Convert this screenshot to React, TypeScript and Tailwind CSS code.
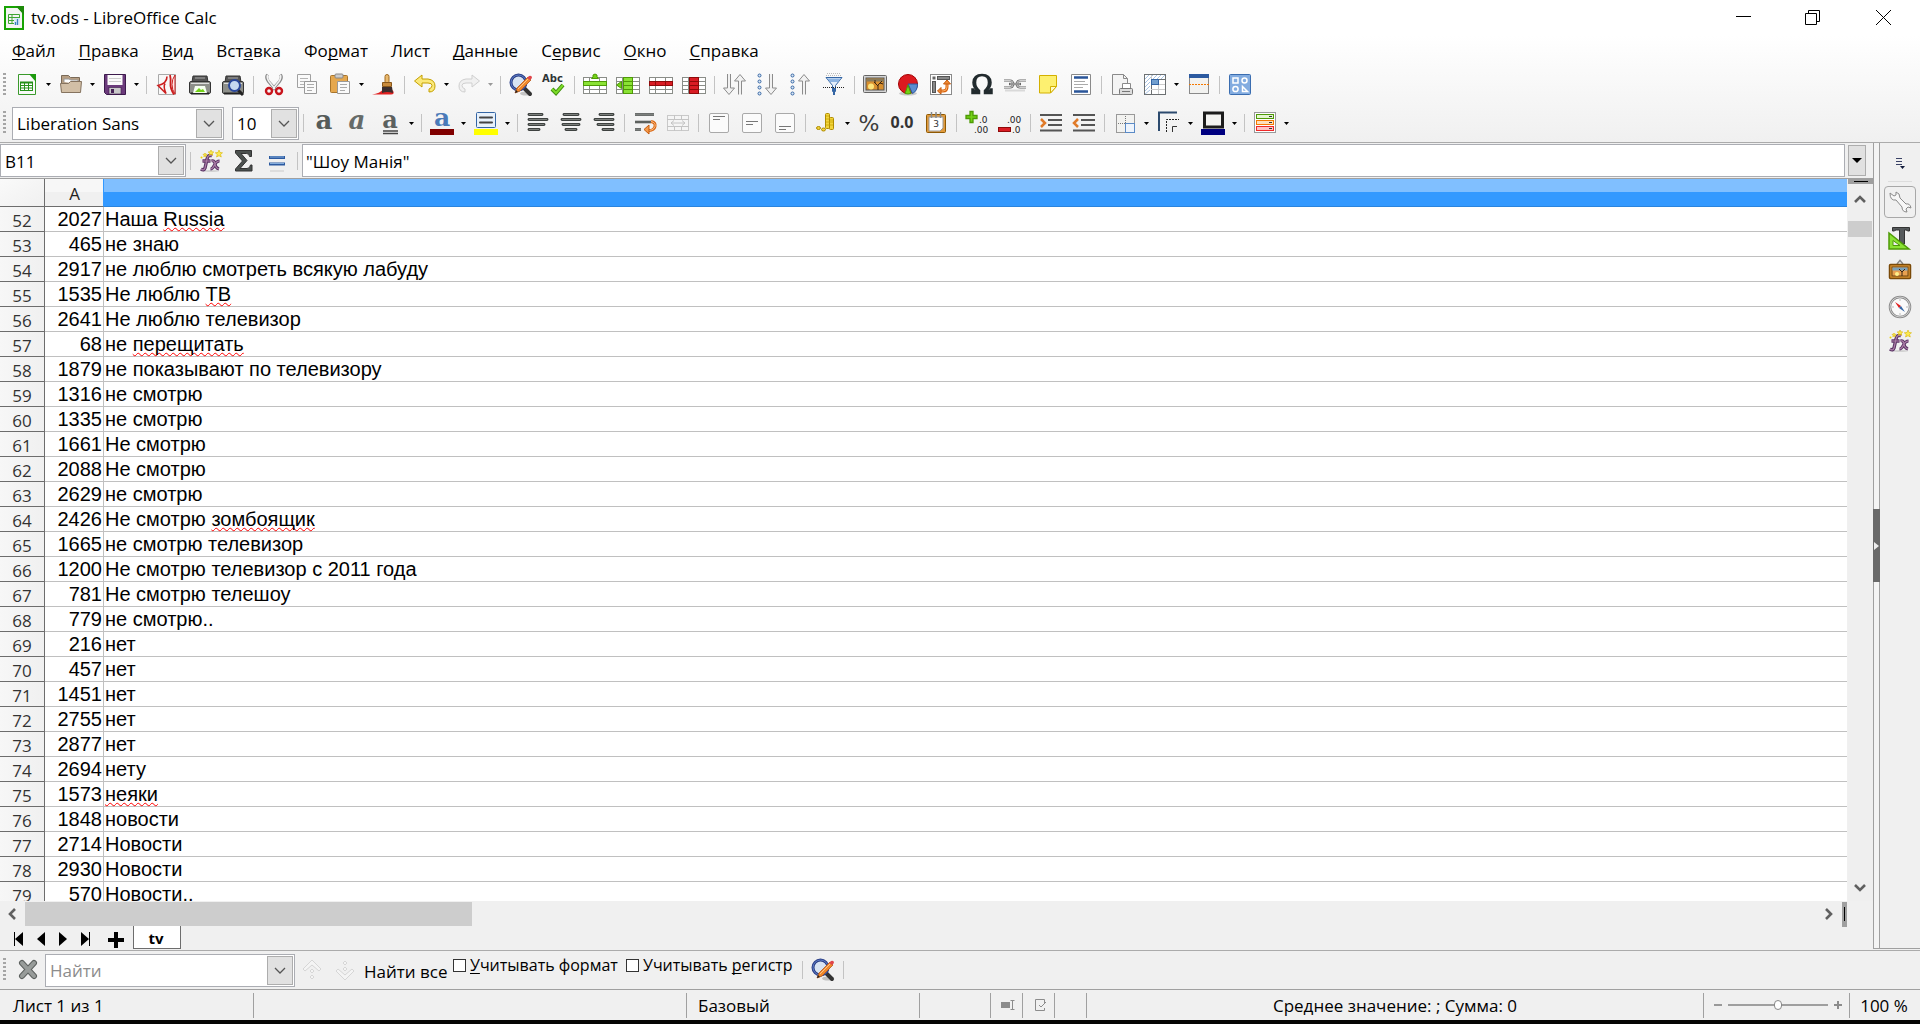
import React, { ReactNode } from 'react';

const rows: [number, string, string?][] = [
  [2027, 'Наша ', 'Russia'],
  [465, 'не знаю'],
  [2917, 'не люблю смотреть всякую лабуду'],
  [1535, 'Не люблю ', 'ТВ'],
  [2641, 'Не люблю телевизор'],
  [68, 'не ', 'перещитать'],
  [1879, 'не показывают по телевизору'],
  [1316, 'не смотрю'],
  [1335, 'не смотрю'],
  [1661, 'Не смотрю'],
  [2088, 'Не смотрю'],
  [2629, 'не смотрю'],
  [2426, 'Не смотрю ', 'зомбоящик'],
  [1665, 'не смотрю телевизор'],
  [1200, 'Не смотрю телевизор с 2011 года'],
  [781, 'Не смотрю телешоу'],
  [779, 'не смотрю..'],
  [216, 'нет'],
  [457, 'нет'],
  [1451, 'нет'],
  [2755, 'нет'],
  [2877, 'нет'],
  [2694, 'нету'],
  [1573, '', 'неяки'],
  [1848, 'новости'],
  [2714, 'Новости'],
  [2930, 'Новости'],
  [570, 'Новости..'],
];

// [before, mnemonic, after]
const menus = [
  ['', 'Ф', 'айл'],
  ['', 'П', 'равка'],
  ['', 'В', 'ид'],
  ['Вст', 'а', 'вка'],
  ['Фо', 'р', 'мат'],
  ['Лист', '', ''],
  ['', 'Д', 'анные'],
  ['С', 'е', 'рвис'],
  ['', 'О', 'кно'],
  ['', 'С', 'правка'],
];

const Icon = ({ children }: { children: ReactNode }) => (
  <svg viewBox="0 0 24 24" className="size-6 shrink-0 overflow-visible" fill="none">
    {children}
  </svg>
);

const Tool = ({ label, children }: { label: string; children: ReactNode }) => (
  <button aria-label={label} className="flex h-8 w-[33px] shrink-0 items-center justify-center">
    <Icon>{children}</Icon>
  </button>
);

const More = ({ label, dim }: { label: string; dim?: boolean }) => (
  <button aria-label={label} className="flex h-8 w-[11px] shrink-0 items-center justify-center">
    <svg viewBox="0 0 5 3" className="h-[3px] w-[5px]">
      <path d="M0 0h5L2.5 3z" fill={dim ? '#999' : '#000'} />
    </svg>
  </button>
);

const Sep = () => (
  <div className="flex w-2 shrink-0 justify-center">
    <div className="h-[18px] w-px bg-[#c3c3c3]" />
  </div>
);

const Grip = () => (
  <svg viewBox="0 0 4 24" className="h-6 w-1 shrink-0" fill="#a5a5a5">
    {[0, 4, 8, 12, 16, 20].map((y) => (
      <rect key={y} x="0" y={y} width="3" height="2" />
    ))}
  </svg>
);

const Chevron = ({ d }: { d: string }) => (
  <svg viewBox="0 0 12 12" className="size-3" fill="none" stroke="#606060" strokeWidth="2.6">
    <path d={d} />
  </svg>
);

const Combo = ({ label, value, placeholder, className }: { label: string; value?: string; placeholder?: string; className: string }) => (
  <div className={`flex h-[33px] shrink-0 border border-[#abadb3] bg-white p-px ${className}`}>
    <input
      aria-label={label}
      defaultValue={value}
      placeholder={placeholder}
      className="w-0 min-w-0 flex-1 px-[3px] pt-0.5 outline-none placeholder:text-[#8c8c8c]"
    />
    <button aria-label={`${label}: список`} className="flex w-[26px] items-center justify-center border border-[#adadad] bg-[#e1e1e1]">
      <svg viewBox="0 0 12 7" className="h-[7px] w-3" fill="none" stroke="#555" strokeWidth="1.3">
        <path d="M1 1l5 5 5-5" />
      </svg>
    </button>
  </div>
);

/* Drawings shared by several buttons */

const GridLines = () => (
  <>
    <rect x="0.5" y="4.5" width="23" height="16" fill="#fff" stroke="#8a8d88" />
    <path d="M0 8.5h24M0 12.5h24M0 16.5h24M6.5 4v17M16.5 4v17" stroke="#8a8d88" />
  </>
);

const FindIcon = () => (
  <>
    <ellipse cx="17" cy="20.5" rx="6" ry="2" fill="#000" opacity=".2" />
    <path d="M15 15l6 6" stroke="#333" strokeWidth="4" strokeLinecap="round" />
    <circle cx="9.5" cy="9.5" r="7.5" fill="#d8e4f2" stroke="#2b3f86" strokeWidth="3" />
    <circle cx="9.5" cy="9.5" r="7.5" stroke="#5f7fc9" />
    <path d="M6 20l2-5L19 4l3 3-11 11z" fill="#f0892b" stroke="#b4561a" strokeWidth=".8" />
    <path d="M9 16L20 5" stroke="#fcc48a" />
    <path d="M18 5l2-2q3-1 3 2l-2 2z" fill="#e0444a" />
    <path d="M6 20l1-3 2 2z" fill="#222" />
  </>
);

const FxIcon = () => (
  <>
    <ellipse cx="12" cy="22" rx="8" ry="1" fill="#000" opacity=".12" />
    <path d="M13 7q-4-2-5 3L6 19q-1 3-4 1M3.5 12h8" stroke="#5c3566" strokeWidth="3.4" />
    <path d="M12.5 12q3-1 3.5 3t4 5M20.5 12q-3 0-5 4t-4 4" stroke="#5c3566" strokeWidth="3" />
    <path d="M13 7q-4-2-5 3L6 19q-1 3-4 1M3.5 12h8M12.5 12q3-1 3.5 3t4 5M20.5 12q-3 0-5 4t-4 4" stroke="#ad7fa8" strokeWidth="1.2" />
    <path
      d="M20 1l1 2.5 2.5.3-2 1.7.8 2.5L20 6.700 17.5 8l.8-2.5-2-1.7 2.7-.3zM12 1l.8 1.8 2 .2-1.5 1.3.4 2-1.7-1-1.7 1 .4-2L9.2 3l2-.2zM6 4l.5 1.2 1.5.2-1 1 .2 1.3L6 7l-1.200.7.2-1.3-1-1 1.5-.2z"
      fill="#fce94f"
      stroke="#d9b600"
      strokeWidth=".6"
    />
    <circle cx="2.5" cy="8.5" r="1" fill="#edd400" />
  </>
);

const ArrowDown = ({ x }: { x: number }) => (
  <path d={`M${x - 1.5} 1v14h-4l5.500 6.500 5.500-6.500h-4V1`} fill="#f2f2f2" stroke="#8c8c8c" />
);

const ArrowUp = ({ x }: { x: number }) => (
  <path d={`M${x - 1.5} 21.500V8h-4l5.500-6.500 5.500 6.500h-4v13.500`} fill="#f2f2f2" stroke="#8c8c8c" />
);

const Dots = () => (
  <g stroke="#3465a4" fill="#dce8f5">
    <circle cx="3.500" cy="2.500" r="1.500" />
    <circle cx="3.500" cy="8.500" r="1.500" />
    <circle cx="3.500" cy="14.500" r="1.500" />
    <circle cx="3.500" cy="20.500" r="1.500" />
  </g>
);

const StandardBar = () => (
  <div className="flex h-[35px] items-center pl-[3px]">
    <Grip />
    <div className="w-[3px] shrink-0" />
    <Tool label="Создать">
      <path d="M3.5 1.5h12l5 5v15h-17z" fill="#fafafa" stroke="#3a9a2c" />
      <path d="M14 1h7v8z" fill="#1d9a0f" />
      <rect x="5.5" y="9.5" width="12" height="8" fill="#fff" stroke="#27911a" />
      <path d="M5 9.5h13" stroke="#27911a" strokeWidth="2" />
      <path d="M5 12.5h13M5 15h13M9.5 9v9M13.5 9v9" stroke="#27911a" />
    </Tool>
    <More label="Создать: ещё" />
    <Tool label="Открыть">
      <path d="M2.5 18V2.500h7l2 2h9V18z" fill="#b79f84" stroke="#7a6a58" />
      <path d="M5 9V6h5l2 1h7v4" fill="#fff" stroke="#999" />
      <path d="M1.500 10.5h8l2-2h11L21.5 19.5h-19z" fill="#d2bfa6" stroke="#85735f" />
    </Tool>
    <More label="Открыть: ещё" />
    <Tool label="Сохранить">
      <path d="M1.5 1.5h21v20h-19l-2-2z" fill="#6b3a7b" stroke="#3c1a4c" />
      <rect x="4.5" y="2" width="15" height="10" fill="#fafafa" />
      <path d="M6 5.5h12M6 8.5h12" stroke="#ccc" />
      <rect x="6" y="14.5" width="12" height="6.5" fill="#c9c9c9" stroke="#3c1a4c" strokeWidth=".6" />
      <rect x="8" y="16" width="3" height="4" fill="#472357" />
    </Tool>
    <More label="Сохранить: ещё" />
    <Sep />
    <Tool label="Экспорт в PDF">
      <path d="M3.5 1.5h17v20h-17z" fill="#f8f8f8" stroke="#a9a9a9" />
      <path d="M15 2q1 4 .5 8.500T19 21.500" stroke="#cc1f1f" strokeWidth="1.800" />
      <path d="M20 2v19q-3-4-3-9.500T20 2z" fill="#fdeaea" stroke="#cc1f1f" />
      <path d="M12 3.500q0 7-9 9l8 8q-3-7-1-10" stroke="#cc1f1f" strokeWidth="1.600" />
    </Tool>
    <Tool label="Печать">
      <path d="M5 3h14l1 6H4z" fill="#555" stroke="#333" />
      <path d="M7 5h10" stroke="#aaa" />
      <rect x="1.5" y="8.5" width="21" height="12" rx="1.5" fill="#8d8f8a" stroke="#333" />
      <path d="M3 10.5h18" stroke="#ddd" />
      <path d="M3 20.5h18" stroke="#222" strokeWidth="2" />
      <path d="M7 13h10l2 7H5z" fill="#f5fff0" />
      <path d="M8 18l3-3 2 2 2-1 2 3H7z" fill="#73d216" />
    </Tool>
    <Tool label="Просмотр печати">
      <path d="M5 3h14l1 6H4z" fill="#555" stroke="#333" />
      <path d="M7 5h10" stroke="#aaa" />
      <rect x="1.5" y="8.5" width="21" height="12" rx="1.5" fill="#8d8f8a" stroke="#333" />
      <path d="M3 10.5h18" stroke="#ddd" />
      <path d="M3 20.5h18" stroke="#222" strokeWidth="2" />
      <path d="M17 17l5 5" stroke="#222" strokeWidth="3" />
      <circle cx="13.5" cy="12.5" r="5.5" fill="#c6d9f0" stroke="#2a489b" strokeWidth="2" />
    </Tool>
    <Sep />
    <Tool label="Вырезать">
      <path d="M5.5 1.5q-2 3 1 7l7 8M18.5 1.5q2 3-1 7l-7 8" stroke="#888" strokeWidth="3" />
      <path d="M5.5 2q-1 3 1.5 6.5l6 7.5M18.5 2q1 3-1.5 6.5L11 16" stroke="#f3f3f3" strokeWidth="1.5" />
      <circle cx="7" cy="18" r="3" stroke="#c8141c" strokeWidth="2.400" />
      <circle cx="17" cy="18" r="3" stroke="#c8141c" strokeWidth="2.400" />
    </Tool>
    <Tool label="Копировать">
      <path d="M2.5 1.5h13v13h-13z" fill="#fafafa" stroke="#a0a0a0" />
      <path d="M5 5.5h8M5 8.5h8M5 11.5h5" stroke="#b4b4b4" />
      <path d="M9.5 8.5h12v12h-12z" fill="#fafafa" stroke="#999" />
      <path d="M12 11.500h7M12 14.500h7M12 17.500h5" stroke="#aaa" />
    </Tool>
    <Tool label="Вставить">
      <rect x="2.5" y="2.5" width="17" height="17" rx="1" fill="#e5a84f" stroke="#a8752c" />
      <rect x="7" y="1" width="8" height="4" rx="1" fill="#ccc" stroke="#888" />
      <path d="M9.5 8.5h12v12h-12z" fill="#fafafa" stroke="#999" />
      <path d="M12 11.500h7M12 14.500h7M12 17.500h5" stroke="#aaa" />
    </Tool>
    <More label="Вставить: ещё" />
    <Tool label="Копировать форматирование">
      <path d="M0 21.500q8-1 11-5l10 1q2 4-2 4z" fill="#e02020" />
      <rect x="13" y="1.5" width="4" height="9" rx="2" fill="#e9b96e" stroke="#a06a20" />
      <path d="M10.5 9.500h9v4h-9z" fill="#c98b3c" stroke="#87561a" />
      <path d="M10 14h10l1 6q-6-2-11 0z" fill="#3a2d2d" />
    </Tool>
    <Sep />
    <Tool label="Отменить">
      <path d="M9 2v4h6q7 1 7 7t-6 6v-3q3-1 3-3.5T15 10H9v4L1.5 8z" fill="#fbe97a" stroke="#c4a000" />
    </Tool>
    <More label="Отменить: ещё" />
    <Tool label="Вернуть">
      <path d="M15 2v4H9q-7 1-7 7t6 6v-3q-3-1-3-3.5T9 10h6v4l7.5-6z" fill="#f0f0f0" stroke="#cfcfcf" />
    </Tool>
    <More label="Вернуть: ещё" dim />
    <Sep />
    <Tool label="Найти и заменить">
      <FindIcon />
    </Tool>
    <Tool label="Проверка орфографии">
      <text x="0" y="9" fontFamily="'DejaVu Sans', sans-serif" fontWeight="700" fontSize="10" fill="#2e3436">
        Abc
      </text>
      <path d="M10 16l4 4 7-8" stroke="#3f8f0c" strokeWidth="4" />
      <path d="M10 16l4 4 7-8" stroke="#7ddc28" strokeWidth="2" />
    </Tool>
    <Sep />
    <Tool label="Вставить строку">
      <GridLines />
      <rect x=".5" y="8.5" width="23" height="4" fill="#8ae234" stroke="#4e9a06" />
      <path d="M8.5 5.5L10 4V2q2-2 4 0v2l1.5 1.500z" fill="#73d216" stroke="#4e9a06" />
    </Tool>
    <Tool label="Вставить столбец">
      <GridLines />
      <rect x="7.5" y="4.5" width="9" height="16" fill="#8ae234" stroke="#4e9a06" />
      <path d="M8 8.5h8M8 12.5h8M8 16.5h8" stroke="#4e9a06" />
      <path d="M5.5 8.5v7l-5-3.500z" fill="#73d216" stroke="#4e9a06" />
    </Tool>
    <Tool label="Удалить строку">
      <GridLines />
      <rect x=".5" y="8.5" width="23" height="4" fill="#d91c24" stroke="#8f0a0a" />
      <path d="M6.5 9v3M16.5 9v3" stroke="#8f0a0a" />
    </Tool>
    <Tool label="Удалить столбец">
      <GridLines />
      <rect x="7.5" y="4.5" width="9" height="16" fill="#d91c24" stroke="#8f0a0a" />
      <path d="M8 8.5h8M8 12.5h8M8 16.5h8" stroke="#8f0a0a" />
    </Tool>
    <Sep />
    <Tool label="Сортировка">
      <ArrowDown x={6} />
      <ArrowUp x={17} />
    </Tool>
    <Tool label="Сортировка по возрастанию">
      <Dots />
      <ArrowDown x={15} />
    </Tool>
    <Tool label="Сортировка по убыванию">
      <Dots />
      <ArrowUp x={15} />
    </Tool>
    <Tool label="Автофильтр">
      <path d="M5 .500h14M4 2.500h15" stroke="#bbb" strokeDasharray="1 1" />
      <path d="M4 4.5h16l-6.500 8v6h-3v-6z" fill="#e4eefa" stroke="#3465a4" />
      <path d="M5 5.500h14l-3 3.500H8z" fill="#8db4e2" />
      <path d="M1 14.500h22" stroke="#222" strokeDasharray="1 1" />
      <path d="M12 15v7" stroke="#3465a4" strokeWidth="2" strokeDasharray="3 1" />
    </Tool>
    <Sep />
    <Tool label="Изображение">
      <rect x=".5" y="2.5" width="23" height="17" rx="1" fill="#d4d4d4" stroke="#666" />
      <rect x="3" y="5" width="18" height="12" fill="#d9902f" stroke="#555" />
      <path d="M3.5 5.5h17v3h-17z" fill="#8a7b5a" />
      <circle cx="8" cy="13.500" r="3" fill="#fce37a" />
      <path d="M15 17v-5M15 13l-4-4M15 12l4-4M12 10V7M17 10l3 1" stroke="#3b2412" />
    </Tool>
    <Tool label="Диаграмма">
      <ellipse cx="12" cy="20.5" rx="9" ry="2" fill="#000" opacity=".18" />
      <circle cx="12" cy="11" r="9.500" fill="#dd1a20" stroke="#a40000" />
      <path d="M12 11h9.500q0 7-5 9.500z" fill="#5b8ed0" stroke="#2c5aa0" />
      <path d="M12 12l3 8.500q-3 1-6 0z" fill="#73d216" stroke="#4e9a06" />
    </Tool>
    <Tool label="Сводная таблица">
      <rect x="1.5" y="1.5" width="21" height="20" fill="#fff" stroke="#8a8a8a" />
      <rect x="3.5" y="3.5" width="3" height="3" fill="#666" />
      <rect x="8.5" y="3.5" width="12" height="3" fill="#888" stroke="#555" />
      <rect x="3.5" y="8.5" width="3" height="11" fill="#888" stroke="#555" />
      <path d="M11 18h3q4 0 4-4V10" stroke="#d9650f" strokeWidth="3" />
      <path d="M11 18h3q4 0 4-4V10" stroke="#fcb06a" />
      <path d="M14.5 11L18 7l3.500 4zM12 14.5L8.500 18l3.500 3z" fill="#f08a34" stroke="#c65a0c" />
    </Tool>
    <Sep />
    <Tool label="Специальные символы">
      <path
        d="M2 20.500h7.500V17.500Q5.500 14 5.500 9.500q0-7 6.500-7t6.500 7q0 4.500-4 8v3H22V16h-1.500l-1 1.500H17Q21 14 21 9.500 20.500 1.500 12 1.500T3 9.500Q3 14 7 17.500H4.500l-1-1.500H2z"
        fill="#222b2e"
        stroke="#222b2e"
        strokeWidth="1.500"
      />
    </Tool>
    <Tool label="Гиперссылка">
      <path d="M1 7.500h6q3 0 3 3.500t-3 3.500H1M23 7.500h-6q-3 0-3 3.500t3 3.500h6" stroke="#666" strokeWidth="2.200" />
      <path d="M1 7.500h6q3 0 3 3.500t-3 3.500H1M23 7.500h-6q-3 0-3 3.500t3 3.500h6" stroke="#ddd" strokeWidth=".9" />
      <path d="M6 11h12" stroke="#666" strokeWidth="2.400" />
      <path d="M7 11h10" stroke="#ddd" strokeWidth=".8" />
      <path d="M2 17.500h20" stroke="#000" opacity=".12" strokeWidth="2" />
    </Tool>
    <Tool label="Примечание">
      <path d="M3.5 2.5h17v11l-6 6.500h-11z" fill="#fdf070" stroke="#d3b000" />
      <path d="M20.5 13.5h-6V20z" fill="#fffbc8" stroke="#d3b000" />
    </Tool>
    <Tool label="Колонтитулы">
      <path d="M2.5 1.5h19v20h-19z" fill="#fff" stroke="#8a8a8a" />
      <path d="M5 4.500h14M5 18.500h14" stroke="#2a5599" strokeWidth="2.600" />
      <path d="M5 8.5h11M5 11.500h14M5 14.500h9" stroke="#aaa" />
    </Tool>
    <Sep />
    <Tool label="Область печати">
      <path d="M2.5 1.5h11l4 4v16h-15z" fill="#f4f4f4" stroke="#8a8a8a" />
      <path d="M13.5 1.5v4h4" stroke="#8a8a8a" />
      <path d="M12.5 17v-6.500h8V17" fill="#fff" stroke="#8a8a8a" />
      <rect x="9.5" y="15.5" width="13" height="6" rx="1" fill="#ddd" stroke="#777" />
      <path d="M12 18.5h8" stroke="#777" />
    </Tool>
    <Tool label="Закрепить строки и столбцы">
      <rect x="1.5" y="1.5" width="21" height="20" fill="#fff" stroke="#6c7072" />
      <path d="M2 6l4-4M2 10l8-8M2 14l5-5M2 18l5-5M2 21l5-4M10 6l4-4M14 6l4-4M18 6l4-4" stroke="#a9c4e4" />
      <path d="M8 6.500h14M8.500 7v14" stroke="#6c7072" />
      <path d="M15.500 7v14M8 11.500h14M8 16.500h14M8.500 2v4" stroke="#ccc" />
      <rect x="8.5" y="6.5" width="7" height="5" fill="#729fcf" stroke="#3465a4" />
    </Tool>
    <More label="Закрепить: ещё" />
    <Tool label="Разбить окно">
      <rect x="2.5" y="1.5" width="19" height="19" fill="#f2f2f0" stroke="#8a8a8a" />
      <path d="M2 3h20" stroke="#2c5aa0" strokeWidth="4" />
      <path d="M2 11.5h20" stroke="#f57900" strokeDasharray="2 1" />
    </Tool>
    <Sep />
    <Tool label="Функции рисования">
      <rect x="1.5" y="1.5" width="21" height="20" rx="1" fill="#83ace0" stroke="#3a6db0" />
      <g stroke="#fff" strokeWidth="1.500">
        <rect x="5" y="5" width="5" height="5" />
        <circle cx="16.5" cy="7.5" r="2.500" />
        <circle cx="7.5" cy="16" r="2.600" />
        <path d="M14.500 13.5v5h5z" />
      </g>
    </Tool>
  </div>
);

const Lines = ({ spans }: { spans: [number, number][] }) => (
  <>
    {spans.map(([x1, x2], i) => (
      <g key={i}>
        <path d={`M${x1} ${3.5 + i * 5}h${x2 - x1}`} stroke="#3e4240" strokeWidth="2.800" strokeLinecap="round" />
        <path d={`M${x1} ${3.5 + i * 5}h${x2 - x1}`} stroke="#8c8f8c" strokeWidth=".8" />
      </g>
    ))}
  </>
);

const Letter = ({ color, italic, size = 26, y = 18 }: { color: string; italic?: boolean; size?: number; y?: number }) => (
  <text
    x="12"
    y={y}
    textAnchor="middle"
    fontFamily="'DejaVu Serif', serif"
    fontWeight="700"
    fontStyle={italic ? 'italic' : 'normal'}
    fontSize={size}
    fill={color}
  >
    a
  </text>
);

const Box = ({ y }: { y: number }) => (
  <>
    <rect x="2.5" y="2.5" width="19" height="19" rx="1.500" fill="#fbfbfb" stroke="#a9a9a9" />
    <path d={`M6 ${y}h12M6 ${y + 3}h7`} stroke="#777" />
  </>
);

const Small = ({ x, y, children }: { x: number; y: number; children: ReactNode }) => (
  <text x={x} y={y} fontFamily="'DejaVu Sans', sans-serif" fontSize="9" fill="#222">
    {children}
  </text>
);

const FormatBar = () => (
  <div className="flex h-10 items-center pt-0.5 pl-[3px]">
    <Grip />
    <div className="w-[5px] shrink-0" />
    <Combo label="Имя шрифта" value="Liberation Sans" className="w-[212px]" />
    <div className="w-2 shrink-0" />
    <Combo label="Размер шрифта" value="10" className="w-[67px]" />
    <Sep />
    <Tool label="Полужирный">
      <Letter color="#555b59" />
    </Tool>
    <Tool label="Курсив">
      <Letter color="#666b69" italic />
    </Tool>
    <Tool label="Подчёркнутый">
      <Letter color="#5c615f" size={24} y={17} />
      <path d="M5 20h15M5 22.500h15" stroke="#444" strokeWidth="1.300" />
    </Tool>
    <More label="Подчёркнутый: ещё" />
    <Sep />
    <Tool label="Цвет шрифта">
      <Letter color="#4a7ab8" size={25} y={15} />
      <rect x="0" y="18" width="24" height="6" fill="#800000" />
    </Tool>
    <More label="Цвет шрифта: ещё" />
    <Tool label="Цвет фона">
      <rect x="2.5" y="1.5" width="19" height="15" rx="1" fill="#e8f1fb" stroke="#3465a4" />
      <path d="M6 6.500h12M6 11.500h12" stroke="#444" strokeWidth="2" strokeLinecap="round" />
      <rect x="0" y="18" width="24" height="6" fill="#ff0" />
    </Tool>
    <More label="Цвет фона: ещё" />
    <Sep />
    <Tool label="По левому краю">
      <Lines spans={[[3, 16], [3, 21], [3, 18], [3, 13]]} />
    </Tool>
    <Tool label="По центру">
      <Lines spans={[[5, 19], [3, 21], [4, 20], [7, 17]]} />
    </Tool>
    <Tool label="По правому краю">
      <Lines spans={[[8, 21], [3, 21], [6, 21], [11, 21]]} />
    </Tool>
    <Sep />
    <Tool label="Перенос текста">
      <path d="M2 3.500h19M2 11h16M2 18.500h6" stroke="#3e4240" strokeWidth="2.600" />
      <path d="M2 3.500h19M2 11h16M2 18.500h6" stroke="#8c8f8c" strokeWidth=".8" />
      <path d="M18 10.500q5 1 4 5t-6 4" stroke="#d9650f" strokeWidth="3" />
      <path d="M18 10.500q5 1 4 5t-6 4" stroke="#fcc08a" />
      <path d="M16 14v9l-5-4.500z" fill="#f59a4a" stroke="#c65a0c" />
    </Tool>
    <Tool label="Объединить ячейки">
      <rect x="1.5" y="4.500" width="21" height="15" fill="#f5f5f5" stroke="#c9c9c9" />
      <path d="M1 8.500h22M1 15.500h22M8.500 4v4M15.500 4v4M8.500 16v4M15.500 16v4M5 12h14M8 9.500L5 12l3 2.500M16 9.500l3 2.500-3 2.500" stroke="#c4c4c4" />
    </Tool>
    <Sep />
    <Tool label="По верхнему краю">
      <Box y={5.5} />
    </Tool>
    <Tool label="Центрировать по вертикали">
      <Box y={10.5} />
    </Tool>
    <Tool label="По нижнему краю">
      <Box y={15.5} />
    </Tool>
    <Sep />
    <Tool label="Денежный формат">
      <g fill="#f2d43c" stroke="#b08c00">
        <rect x="11.500" y="2.500" width="4" height="15" rx="1" />
        <rect x="15.500" y="6.500" width="4" height="12" rx="1" />
        <ellipse cx="4.500" cy="17" rx="2" ry="1.500" />
        <ellipse cx="9.500" cy="18.500" rx="2" ry="1.500" />
      </g>
      <path d="M12 5h3M12 8h3M12 11h7M12 14h7M16 9h3" stroke="#c9a400" strokeWidth=".8" />
    </Tool>
    <More label="Денежный формат: ещё" />
    <Tool label="Процентный формат">
      <text x="11" y="20" textAnchor="middle" fontFamily="'DejaVu Sans', sans-serif" fontSize="22" fill="#3c3c3c">
        %
      </text>
    </Tool>
    <Tool label="Числовой формат">
      <text x="11" y="17" textAnchor="middle" fontFamily="'Open Sans', sans-serif" fontWeight="700" fontSize="16" fill="#333">
        0.0
      </text>
    </Tool>
    <Tool label="Формат даты">
      <rect x="2.5" y="3.500" width="19" height="18" rx="1" fill="#e09a3c" stroke="#8f5902" />
      <path d="M5 6h14v11l-3 3H5z" fill="#fff" stroke="#999" />
      <path d="M7.500 1v6M12 1v6M16.500 1v6" stroke="#888" strokeWidth="1.500" />
      <text x="12" y="16" textAnchor="middle" fontFamily="'DejaVu Sans', sans-serif" fontSize="9" fill="#333">
        3
      </text>
    </Tool>
    <Sep />
    <Tool label="Добавить разряд">
      <path d="M5 .500h3v4h4v3H8v4H5v-4H1v-3h4z" fill="#73d216" stroke="#4e9a06" strokeWidth="1.300" />
      <Small x={14} y={12}>.0</Small>
      <Small x={9} y={22}>.00</Small>
    </Tool>
    <Tool label="Удалить разряд">
      <rect x=".5" y="16.500" width="12" height="4" fill="#d91c24" stroke="#8f0a0a" />
      <Small x={9} y={12}>.00</Small>
      <Small x={14} y={22}>.0</Small>
    </Tool>
    <Sep />
    <Tool label="Увеличить отступ">
      <path d="M1 4h22M9 9h14M9 14h14M1 19.500h22" stroke="#555" strokeWidth="2.200" />
      <path d="M2 8l4 4-4 4" stroke="#e07a28" strokeWidth="2.500" />
    </Tool>
    <Tool label="Уменьшить отступ">
      <path d="M1 4h22M9 9h14M9 14h14M1 19.500h22" stroke="#555" strokeWidth="2.200" />
      <path d="M6 8l-4 4 4 4" stroke="#e07a28" strokeWidth="2.500" />
    </Tool>
    <Sep />
    <Tool label="Обрамление">
      <rect x="3.500" y="3.500" width="18" height="18" fill="#f2f2f0" stroke="#999" />
      <path d="M12.500 5v8M5 12.500h8" stroke="#777" strokeDasharray="1 1" />
      <rect x="12.500" y="12.500" width="9" height="9" fill="#eef4fc" stroke="#5a8ac6" />
    </Tool>
    <More label="Обрамление: ещё" />
    <Tool label="Стиль обрамления">
      <path d="M2 20V1.500h18" stroke="#2c4a6e" strokeWidth="2" />
      <path d="M9.500 21V8.500H22" stroke="#222" strokeDasharray="2 1" />
      <path d="M15.500 21v-5.500H20" stroke="#333" />
    </Tool>
    <More label="Стиль обрамления: ещё" />
    <Tool label="Цвет обрамления">
      <rect x="3.500" y="2" width="18" height="14" fill="#f4f4f2" stroke="#1c1c1c" strokeWidth="3" />
      <rect x="0" y="18" width="24" height="6" fill="#000080" />
    </Tool>
    <More label="Цвет обрамления: ещё" />
    <Sep />
    <Tool label="Условное форматирование">
      <rect x="1.5" y="1.5" width="21" height="20" fill="#fff" stroke="#999" />
      <rect x="3.500" y="3.500" width="17" height="4" fill="#e4f5d0" stroke="#4e9a06" />
      <rect x="3.500" y="9.500" width="17" height="4" fill="#ffe0bc" stroke="#f57900" />
      <rect x="3.500" y="15.500" width="17" height="4" fill="#ffc4c4" stroke="#ef2929" />
      <path d="M16 5.500h3M16 11.500h3M16 17.500h3" stroke="#333" />
    </Tool>
    <More label="Условное форматирование: ещё" />
  </div>
);

const FormulaBar = () => (
  <div className="flex h-9 items-center border-b border-[#a0a0a0] bg-[#f0f0f0]">
    <Combo label="Область листа" value="B11" className="w-[186px]" />
    <Sep />
    <Tool label="Мастер функций">
      <FxIcon />
    </Tool>
    <Tool label="Сумма">
      <path d="M3.500 1.500h16v6h-2q0-3-3-3H9l6 7-7 8h7q3 0 3.500-3.500H20v6H3.500v-2l7-8-7-8z" fill="#4b504e" stroke="#333" />
    </Tool>
    <Tool label="Функция">
      <path d="M4 8.500h16M4 15h16" stroke="#2c5aa0" strokeWidth="3" />
      <path d="M5 8h14M5 14.500h14" stroke="#86aedd" />
      <path d="M5 22h14" stroke="#000" opacity=".08" strokeWidth="2" />
    </Tool>
    <Sep />
    <input
      aria-label="Строка ввода"
      defaultValue={'"Шоу Манія"'}
      className="ml-px h-[33px] min-w-0 flex-1 border border-[#abadb3] bg-white px-[3px] pt-0.5 outline-none"
    />
    <button aria-label="Развернуть строку формул" className="mr-[7px] ml-[3px] flex h-[31px] w-[18px] items-center justify-center border border-[#adadad] bg-[#e1e1e1]">
      <svg viewBox="0 0 10 5" className="h-[5px] w-2.5">
        <path d="M0 0h10L5 5z" />
      </svg>
    </button>
  </div>
);

const Sheet = () => (
  <div className="min-w-0 flex-1 overflow-hidden bg-white">
    <table className="w-full table-fixed border-separate border-spacing-0">
      <colgroup>
        <col className="w-[45px]" />
        <col className="w-[59px]" />
        <col />
      </colgroup>
      <thead>
        <tr className="h-7 leading-5">
          <th className="border-r border-b border-[#6d6d6d] bg-linear-to-br from-[#fafafa] to-[#f0f0f0] p-0" aria-label="Выделить всё" />
          <th className="border-r border-b border-r-[#3399ff] border-b-[#6d6d6d] bg-linear-to-b from-[#f7f7f7] from-50% to-[#f0f0f0] to-50% p-0 pt-0.5 pl-px font-normal text-[#222]">
            A
          </th>
          <th className="border-b border-[#2b84dd] bg-linear-to-b from-[#80bfff] from-50% to-[#3399ff] to-50% p-0" aria-label="B" />
        </tr>
      </thead>
      <tbody>
        {rows.map(([num, text, typo], i) => (
          <tr key={i} className="h-[25px] leading-6">
            <th scope="row" className="border-r border-b border-[#6d6d6d] bg-linear-to-r from-[#f7f7f7] to-[#f0f0f0] p-0 font-normal text-[#333]">
              <div className="h-6 pt-0.5">{i + 52}</div>
            </th>
            <td className="border-r border-b border-[#c0c0c0] p-0 pr-px text-right font-['Liberation_Sans',sans-serif] text-[20px]">{num}</td>
            <td className="border-b border-[#c0c0c0] p-0 pl-px font-['Liberation_Sans',sans-serif] text-[20px] whitespace-pre">
              {text}
              {typo && (
                <span className="underline decoration-[#f00] decoration-wavy decoration-1 underline-offset-1 [text-decoration-skip-ink:none]">
                  {typo}
                </span>
              )}
            </td>
          </tr>
        ))}
      </tbody>
    </table>
  </div>
);

const VerticalScroll = () => (
  <div className="ml-px flex w-[25px] flex-col items-center bg-[#efefef]">
    <div className="flex h-[5px] w-full items-center justify-center bg-[#9f9f9f]">
      <div className="h-px w-3.5 bg-black" />
    </div>
    <button aria-label="Вверх" className="flex h-[37px] w-full items-center justify-center pr-px pb-2">
      <Chevron d="M1 9l5-5 5 5" />
    </button>
    <div className="h-4 w-full border-r border-[#efefef] bg-[#cdcdcd]" />
    <button aria-label="Вниз" className="mt-auto flex h-[26px] w-full items-center justify-center pr-px">
      <Chevron d="M1 3l5 5 5-5" />
    </button>
  </div>
);

const TabBar = () => (
  <div className="flex h-[23px] items-stretch pl-2.5">
    {[
      ['Первый лист', 'M4 3v14h1V3zM13 3v14l-8-7z'],
      ['Предыдущий лист', 'M13 3v14l-8-7z'],
      ['Следующий лист', 'M5 3v14l8-7z'],
      ['Последний лист', 'M5 3v14l8-7zM13 3v14h1V3z'],
    ].map(([label, d]) => (
      <button key={label} aria-label={label} className="flex w-[22px] items-center">
        <svg viewBox="0 0 18 18" className="size-[18px]">
          <path d={d} />
        </svg>
      </button>
    ))}
    <button aria-label="Добавить лист" className="flex w-[35px] items-center justify-center pt-1">
      <svg viewBox="0 0 16 16" className="size-4">
        <path d="M6 0h4v6h6v4h-6v6H6v-6H0V6h6z" />
      </svg>
    </button>
    <button className="w-12 border-x border-b border-[#6d6d6d] bg-white pt-0.5 pr-0.5 text-[15px] leading-5 font-bold">tv</button>
  </div>
);

const SideBar = () => (
  <>
    <div className="flex w-[7px] shrink-0 items-center border-x border-b border-[#a0a0a0] bg-[#f4f4f4]">
      <button aria-label="Скрыть боковую панель" className="-mx-px flex h-[73px] w-[7px] shrink-0 items-center justify-center bg-[#696969]">
        <svg viewBox="0 0 5 8" className="h-2 w-[5px]">
          <path d="M0 0l5 4-5 4z" fill="#eee" />
        </svg>
      </button>
    </div>
    <div className="flex w-10 shrink-0 flex-col items-center border-b border-[#a0a0a0] bg-[#f0f0f0]">
      <button aria-label="Настройки боковой панели" className="mt-2 flex h-[31px] items-center border-b border-[#ddd] pb-2">
        <Icon>
          <path d="M8 8.500h6M8 11.500h6M8 14.500h6" stroke="#3a4266" />
          <path d="M12 16h5l-2.500 3z" fill="#111a3a" />
        </Icon>
      </button>
      <button aria-label="Свойства" className="mt-1 flex size-8 items-center justify-center rounded border border-[#a8a8a8]">
        <Icon>
          <path d="M2 3l4 3 2-1V2q4 1 4 6l6 6q4-1 5 4l-3-1-2 2 1 3q-5 0-5-5L8 10q-6 1-6-7z" fill="#f7f7f7" stroke="#8a8a8a" />
        </Icon>
      </button>
      <button aria-label="Стили" className="mt-1.5 flex h-7 items-center">
        <Icon>
          <path d="M4.500 5V1.500h17V5h-2q0-1-2-1h-1v14h-5V4h-3Q6.500 4 6.500 5z" fill="#565a5c" stroke="#333" />
          <path d="M1 7v16h20z" fill="#8ae234" stroke="#4e9a06" strokeWidth="1.500" />
          <path d="M5 14.500v5h7z" fill="#f0f0f0" stroke="#4e9a06" />
        </Icon>
      </button>
      <button aria-label="Галерея" className="mt-[3px] flex h-8 items-center">
        <Icon>
          <path d="M9 5l3-3.500L15 5" stroke="#888" strokeWidth="1.500" />
          <rect x="1.500" y="5.500" width="21" height="14" rx="1" fill="#d9902f" stroke="#7a4a08" strokeWidth="1.500" />
          <rect x="4" y="8" width="16" height="9" fill="#e8a050" stroke="#6a4412" />
          <path d="M4.500 8.500h15v3h-15z" fill="#7aa0b8" />
          <circle cx="9" cy="15" r="2" fill="#fff08a" />
          <path d="M14 17v-4l-3-3M14 13l3-3" stroke="#3b2412" />
        </Icon>
      </button>
      <button aria-label="Навигатор" className="mt-1 flex h-8 items-center">
        <Icon>
          <circle cx="12" cy="12" r="10" fill="#fafafa" stroke="#888" strokeWidth="2.500" />
          <circle cx="12" cy="12" r="10" stroke="#d0d0d0" />
          <path d="M7 7l6 4-2 2z" fill="#e01b1b" />
          <path d="M17 17l-4-6-2 2z" fill="#3465a4" />
          <path d="M12 4v2M12 18v2M4 12h2M18 12h2" stroke="#bbb" />
        </Icon>
      </button>
      <button aria-label="Функции" className="mt-0.5 flex h-8 items-center">
        <Icon>
          <FxIcon />
        </Icon>
      </button>
    </div>
  </>
);

const FindArrow = ({ down }: { down?: boolean }) => (
  <g stroke="#d6d6d6" fill="#f4f4f4" transform={down ? 'rotate(180 12 12)' : undefined}>
    <path d="M3 11l9-9 9 9-2 2-7-6-7 6z" />
    <path d="M12 11l2 2-2 2-2-2zM12 17l2 2-2 2-2-2z" />
  </g>
);

const FindBar = () => (
  <div className="flex h-[39px] items-center border-t border-[#ababab] pl-[3px]">
    <Grip />
    <div className="w-1 shrink-0" />
    <Tool label="Закрыть панель поиска">
      <path d="M6 5l12 13M18 5L6 18" stroke="#5c605e" strokeWidth="6" strokeLinecap="round" />
      <path d="M6 5l12 13M18 5L6 18" stroke="#989c9a" strokeWidth="4" strokeLinecap="round" />
    </Tool>
    <Combo label="Найти" placeholder="Найти" className="ml-px w-[250px]" />
    <Tool label="Найти предыдущее">
      <FindArrow />
    </Tool>
    <Tool label="Найти следующее">
      <FindArrow down />
    </Tool>
    <button className="ml-[3px] w-[89px] shrink-0 pt-1 text-left whitespace-nowrap">Найти все</button>
    <label className="flex w-[173px] shrink-0 items-center gap-1 pb-2.5 text-base whitespace-nowrap">
      <input type="checkbox" className="size-[13px] shrink-0 appearance-none border border-[#333] bg-white" />
      <span>
        <u className="underline-offset-2 [text-decoration-skip-ink:none]">У</u>читывать формат
      </span>
    </label>
    <label className="flex w-[172px] shrink-0 items-center gap-1 pb-2.5 text-base whitespace-nowrap">
      <input type="checkbox" className="size-[13px] shrink-0 appearance-none border border-[#333] bg-white" />
      <span>
        Учитывать <u className="underline-offset-2 [text-decoration-skip-ink:none]">р</u>егистр
      </span>
    </label>
    <Sep />
    <Tool label="Найти и заменить">
      <FindIcon />
    </Tool>
    <Sep />
  </div>
);

const StatusCell = ({ className, children }: { className: string; children?: ReactNode }) => (
  <div className={`flex h-[25px] items-center border-r border-[#a0a0a0] whitespace-nowrap ${className}`}>{children}</div>
);

const StatusBar = () => (
  <footer className="flex h-[31px] items-center border-t border-[#a0a0a0]">
    <StatusCell className="w-[254px] pt-0.5 pl-[13px]">Лист 1 из 1</StatusCell>
    <StatusCell className="w-[433px]" />
    <StatusCell className="w-[233px] pt-0.5 pl-[11px]">Базовый</StatusCell>
    <StatusCell className="w-[71px]" />
    <StatusCell className="w-8 justify-center pl-0.5">
      <svg viewBox="0 0 14 12" className="h-3 w-3.5" fill="none">
        <path d="M0 3h9v6H0z" fill="#8c8c8c" />
        <path d="M9.500 1.500h4M9.500 10.500h4M11.500 1v10" stroke="#8c8c8c" />
      </svg>
    </StatusCell>
    <StatusCell className="w-8 justify-center pl-1">
      <svg viewBox="0 0 12 12" className="size-3" fill="none" stroke="#8c8c8c">
        <path d="M9.500 4V.500h-9v11h9V9M4 6l2 2 5-5" />
      </svg>
    </StatusCell>
    <StatusCell className="w-8" />
    <StatusCell className="min-w-0 flex-1 justify-center pt-0.5">Среднее значение: ; Сумма: 0</StatusCell>
    <StatusCell className="w-[146px] gap-1.5 pl-2.5 text-[#8c8c8c]">
      <button aria-label="Уменьшить масштаб" className="h-0.5 w-2 bg-[#999]" />
      <input
        type="range"
        aria-label="Масштаб"
        className="h-3 w-[100px] appearance-none [background:linear-gradient(#9f9f9f,#9f9f9f)_center/100%_2px_no-repeat] [&::-webkit-slider-thumb]:h-2.5 [&::-webkit-slider-thumb]:w-2 [&::-webkit-slider-thumb]:appearance-none [&::-webkit-slider-thumb]:rounded-full [&::-webkit-slider-thumb]:border [&::-webkit-slider-thumb]:border-[#888] [&::-webkit-slider-thumb]:bg-white"
      />
      <button aria-label="Увеличить масштаб">
        <svg viewBox="0 0 8 8" className="size-2" stroke="#8c8c8c" strokeWidth="2">
          <path d="M0 4h8M4 0v8" />
        </svg>
      </button>
    </StatusCell>
    <div className="w-[70px] pt-0.5 pr-0.5 text-center whitespace-nowrap">100 %</div>
  </footer>
);

const App = () => {
  return (
    <div className="flex h-screen flex-col overflow-hidden bg-[#f0f0f0] font-['Open_Sans','Noto_Sans',sans-serif] text-[17px] leading-6 text-black">
      <header className="border-b border-[#ababab] bg-linear-to-b from-white from-25% to-[#f0f0f0]">
        {/* Title bar */}
        <div className="flex h-[35px] items-center pl-1">
          <svg viewBox="0 0 20 24" className="h-6 w-5" fill="none">
            <path d="M1 1h13l5 5v17H1z" fill="#f4f4f4" stroke="#18a303" strokeWidth="2" />
            <path d="M12 0h8v9z" fill="#1d8a0a" />
            <path d="M4.500 8.500h11v9h-11zM4.500 11.500h11M4.500 14.500h11M8 8.500v9" stroke="#3fa535" />
            <rect x="10" y="12" width="6" height="7" fill="#dceaf7" />
            <path d="M11.500 19v-3M13.500 19v-6" stroke="#3b7fc4" strokeWidth="1.300" />
          </svg>
          <h1 className="ml-[7px] flex-1">tv.ods - LibreOffice Calc</h1>
          <button aria-label="Свернуть" className="flex h-full w-[70px] items-center justify-center">
            <svg viewBox="0 0 16 16" className="size-4" stroke="#000">
              <path d="M1 6.500h15" />
            </svg>
          </button>
          <button aria-label="Восстановить" className="flex h-full w-[70px] items-center justify-center">
            <svg viewBox="0 0 16 16" className="size-4" stroke="#000" fill="none">
              <path d="M.5 3.500h11v11H.5zM3.500 3.500v-3h11v11h-3" />
            </svg>
          </button>
          <button aria-label="Закрыть" className="flex h-full w-[72px] items-center justify-center">
            <svg viewBox="0 0 16 16" className="size-4" stroke="#000">
              <path d="M0 0l15 15M15 0L0 15" />
            </svg>
          </button>
        </div>

        {/* Menu */}
        <nav className="flex h-8 items-center gap-[23px] pl-3">
          {menus.map(([before, key, after]) => (
            <button key={before + key + after}>
              {before}
              <u className="underline-offset-2 [text-decoration-skip-ink:none]">{key}</u>
              {after}
            </button>
          ))}
        </nav>

        <StandardBar />
        <FormatBar />
      </header>

      <div className="mb-px flex min-h-0 flex-1">
        <main className="flex min-w-0 flex-1 flex-col">
          <FormulaBar />
          <div className="flex min-h-0 flex-1">
            <Sheet />
            <VerticalScroll />
          </div>
          {/* Horizontal scroll */}
          <div className="flex h-[25px] items-center pt-px">
            <button aria-label="Влево" className="flex w-[25px] justify-center">
              <Chevron d="M8 1L3 6l5 5" />
            </button>
            <div className="h-6 w-[447px] bg-[#cdcdcd]" />
            <button aria-label="Вправо" className="ml-auto flex w-[25px] justify-center">
              <Chevron d="M4 1l5 5-5 5" />
            </button>
            <div className="mr-[26px] ml-0.5 flex h-[25px] w-[5px] items-center justify-center bg-[#9f9f9f]">
              <div className="h-3.5 w-px bg-black" />
            </div>
          </div>
          <TabBar />
        </main>
        <SideBar />
      </div>

      <FindBar />
      <StatusBar />
      {/* Strip of the desktop below the window */}
      <div className="h-1 bg-[#050403]" />
    </div>
  );
};

export default App;
